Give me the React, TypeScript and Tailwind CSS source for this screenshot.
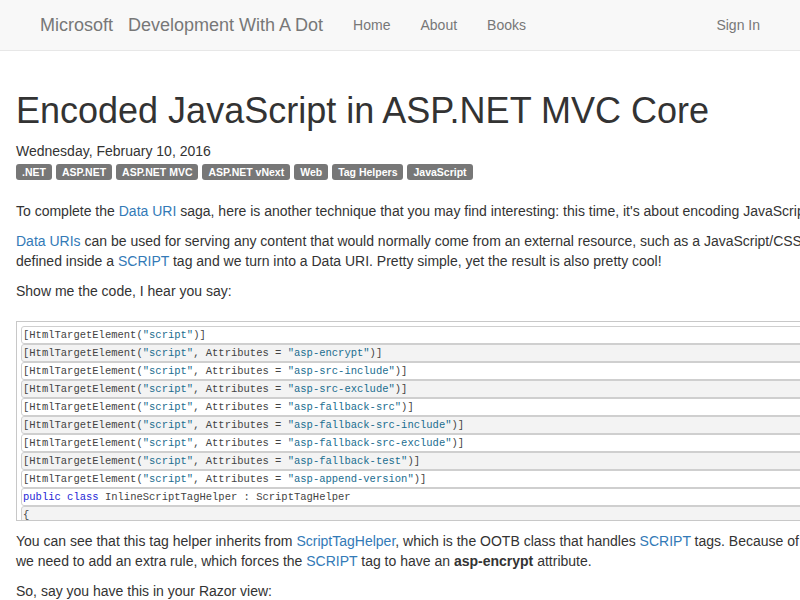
const tags = ['.NET', 'ASP.NET', 'ASP.NET MVC', 'ASP.NET vNext', 'Web', 'Tag Helpers', 'JavaScript']

const attrs = [
  'asp-encrypt',
  'asp-src-include',
  'asp-src-exclude',
  'asp-fallback-src',
  'asp-fallback-src-include',
  'asp-fallback-src-exclude',
  'asp-fallback-test',
  'asp-append-version',
]

function Str({ children }: { children: string }) {
  return <span className="text-[#1a6d8f]">{children}</span>
}

function CodeRow({ odd, children }: { odd: boolean; children: React.ReactNode }) {
  return (
    <div
      className={`h-[18px] border border-[#cfcfcf] rounded-l-[3px] pl-[1px] leading-[16px] whitespace-pre ${
        odd ? 'bg-[#f3f3f3]' : 'bg-white'
      }`}
    >
      {children}
    </div>
  )
}

function A({ children }: { children: React.ReactNode }) {
  return <a className="text-[#337ab7]">{children}</a>
}

export default function App() {
  return (
    <div className="w-full overflow-hidden bg-white font-['Liberation_Sans',Arial,sans-serif] text-[14px] leading-[20px] text-[#333]">
      {/* Navbar */}
      <nav className="h-[51px] bg-[#f8f8f8] border-b border-[#e7e7e7] flex items-start px-[40px] text-[#777]">
        <span className="text-[18px] leading-[20px] py-[15px]">Microsoft</span>
        <span className="text-[18px] leading-[20px] py-[15px] ml-[15px]">Development With A Dot</span>
        <div className="flex ml-[30px] gap-[30px]">
          <span className="py-[15px]">Home</span>
          <span className="py-[15px]">About</span>
          <span className="py-[15px]">Books</span>
        </div>
        <span className="ml-auto py-[15px]">Sign In</span>
      </nav>

      {/* Post */}
      <div className="w-[1400px] px-[16px] pt-[40px]">
        <h1 className="text-[36px] leading-[39.6px] mb-[10px]">Encoded JavaScript in ASP.NET MVC Core</h1>
        <div>Wednesday, February 10, 2016</div>
        <div className="flex gap-[4px] h-[20px] items-end pb-[1px]">
          {tags.map((t) => (
            <span
              key={t}
              className="bg-[#777] text-white font-bold text-[10.5px] leading-[16px] h-[16px] px-[6px] rounded-[3px] whitespace-nowrap"
            >
              {t}
            </span>
          ))}
        </div>

        <div className="mt-[20px]">
          <p className="mb-[10px]">
            To complete the <A>Data URI</A> saga, here is another technique that you may find interesting: this time,
            it's about encoding JavaScript contents, so as to make them more difficult to tamper with.
          </p>
          <p className="mb-[10px]">
            <A>Data URIs</A> can be used for serving any content that would normally come from an external resource,
            such as a JavaScript/CSS file or an image. What we will do here is take some JavaScript that is
            <br />
            defined inside a <A>SCRIPT</A> tag and we turn into a Data URI. Pretty simple, yet the result is also pretty
            cool!
          </p>
          <p className="mb-[10px]">Show me the code, I hear you say:</p>

          {/* Code block */}
          <div className="mt-[20px] h-[200px] overflow-hidden border border-[#c8c8c8] pt-[4px] pl-[4px] font-['Liberation_Mono','Courier_New',monospace] text-[10.5px] text-[#444]">
            <CodeRow odd={false}>
              [HtmlTargetElement(<Str>"script"</Str>)]
            </CodeRow>
            {attrs.map((a, i) => (
              <CodeRow key={a} odd={i % 2 === 0}>
                [HtmlTargetElement(<Str>"script"</Str>, Attributes = <Str>{`"${a}"`}</Str>)]
              </CodeRow>
            ))}
            <CodeRow odd={false}>
              <span className="text-[#1f1fd6]">public class</span> InlineScriptTagHelper : ScriptTagHelper
            </CodeRow>
            <CodeRow odd={true}>{'{'}</CodeRow>
            <CodeRow odd={false}> </CodeRow>
          </div>

          <p className="mt-[10px] mb-[10px]">
            You can see that this tag helper inherits from <A>ScriptTagHelper</A>, which is the OOTB class that handles{' '}
            <A>SCRIPT</A> tags. Because of this inheritance, we can use all of its attributes,
            <br />
            we need to add an extra rule, which forces the <A>SCRIPT</A> tag to have an <b>asp-encrypt</b> attribute.
          </p>
          <p className="mb-[10px]">So, say you have this in your Razor view:</p>
        </div>
      </div>
    </div>
  )
}
